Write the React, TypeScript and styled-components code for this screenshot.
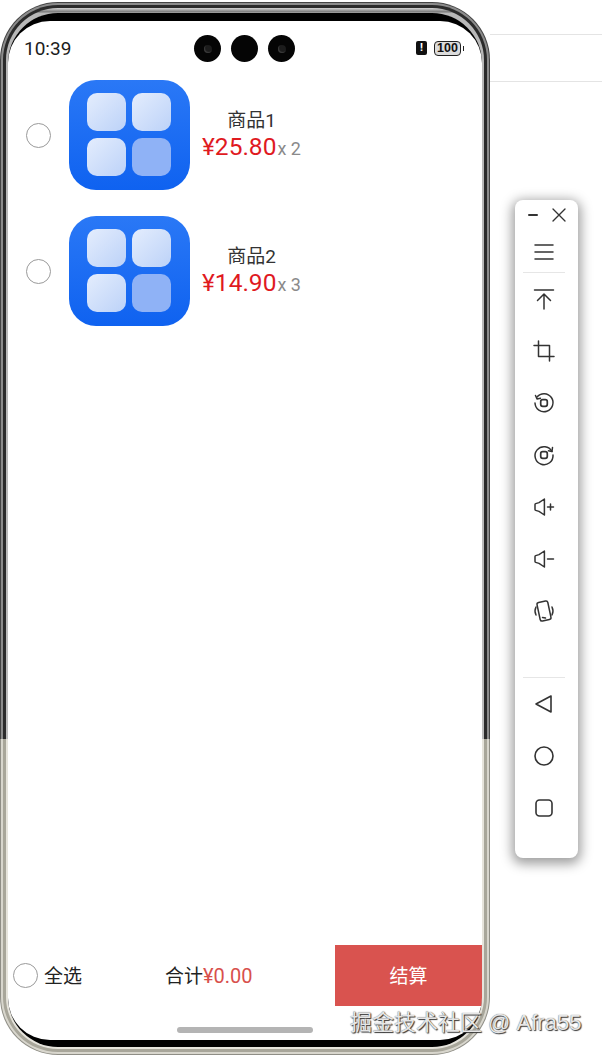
import React from "react";
import styled, { createGlobalStyle } from "styled-components";

const Global = createGlobalStyle`
  html, body { margin: 0; padding: 0; background: #fff; }
  body { font-family: Roboto, "Noto Sans CJK SC", sans-serif; overflow: hidden; }
`;

const Stage = styled.div`
  position: relative; display: flex; width: 602px; height: 1057px; background: #fff; overflow: hidden;
`;
const frame = (dark: string, light: string, at: number) =>
  `linear-gradient(to bottom, ${dark} 0, ${dark} ${at}px, ${light} ${at}px, ${light} 100%)`;
const Phone = styled.div`
  flex: none; width: 490px; height: 1053px; margin-top: 2px; box-sizing: border-box; padding: 1px;
  border-radius: 58px; background: ${frame("#444", "#8f8e86", 737)};
`;
const RingOuter = styled.div`
  height: 100%; box-sizing: border-box; padding: 2px; border-radius: 57px;
  background: ${frame("#8c8c8c", "#d8d6cd", 736)};
`;
const RingMiddle = styled.div`
  height: 100%; box-sizing: border-box; padding: 3px; border-radius: 55px;
  background: ${frame("#2b2b2b", "#a8a69a", 734)};
`;
const RingInner = styled.div`
  height: 100%; box-sizing: border-box; padding: 5px 2px 2px; border-radius: 52px;
  background: linear-gradient(to bottom, #d4d4d4 0, #777 4px, #b8b8b8 5px, #bcbcbc 731px, #e6e4dc 731px, #e6e4dc 100%);
`;
const Bezel = styled.div`
  height: 100%; box-sizing: border-box; padding: 8px 0 7px; border-radius: 50px; background: #000;
`;
const Screen = styled.div`
  display: flex; flex-direction: column; height: 100%; border-radius: 42px; background: #fff; overflow: hidden;
`;
const StatusBar = styled.div`
  flex: none; display: flex; align-items: center; height: 54px; box-sizing: border-box; padding: 0 21px 0 16px;
`;
const Clock = styled.span`
  width: 170px; font-size: 19px; color: #1c1c1c;
`;
const Cameras = styled.div`
  display: flex; gap: 10px;
`;
const Camera = styled.div`
  position: relative; width: 27px; height: 27px; border-radius: 50%; background: #050505;
`;
const Lens = styled.div`
  position: absolute; left: 10px; top: 10px; width: 8px; height: 8px; border-radius: 50%;
  background: #1c1c1c; box-shadow: inset 1px -1px 1px #3c3c3c;
`;
const StatusIcons = styled.div`
  display: flex; align-items: center; gap: 7px; margin-left: auto;
`;
const Alert = styled.div`
  display: flex; align-items: center; justify-content: center; width: 11px; height: 14px; border-radius: 2px;
  background: #111; color: #fff; font-size: 11px; font-weight: 700; line-height: 14px;
`;
const Battery = styled.div`
  position: relative; width: 27px; height: 15px; box-sizing: border-box; border: 1px solid #222; border-radius: 4px;
  background: #dcdcdc; color: #111; font: 700 12.5px/13px "Liberation Sans", sans-serif; text-align: center;
  &::after { content: ""; position: absolute; right: -4px; top: 4px; width: 1px; height: 5px; background: #222; }
`;
const List = styled.div`
  display: flex; flex-direction: column; gap: 26px; padding: 5px 0 0 18px;
`;
const Row = styled.div`
  display: flex; align-items: center; height: 110px;
`;
const Radio = styled.div<{ $size: number }>`
  flex: none; width: ${p => p.$size}px; height: ${p => p.$size}px; box-sizing: border-box;
  border: 1px solid #9a9a9a; border-radius: 50%; background: #fff;
`;
const ProductIcon = styled.svg`
  flex: none; width: 121px; height: 110px; margin-left: 18px; display: block;
`;
const ProductText = styled.div`
  display: flex; flex-direction: column; align-items: center; margin: 0 0 0 12px;
`;
const Title = styled.div`
  font-size: 19px; line-height: 26px; color: #333;
`;
const PriceLine = styled.div`
  display: flex; align-items: baseline; line-height: 26px;
`;
const Price = styled.span`
  font-size: 24.5px; color: #e01a1f;
`;
const Qty = styled.span`
  font-size: 18px; color: #8a8a8a; margin-left: 1px;
`;
const Footer = styled.div`
  flex: none; display: flex; align-items: center; height: 61px; margin-top: auto; padding-left: 5px;
`;
const Label = styled.span`
  font-size: 19px; color: #222; margin: 0 0 3px 6px;
`;
const Total = styled.span`
  font-size: 19px; color: #222; margin: 0 0 3px 83px;
`;
const TotalValue = styled.span`
  font-size: 20px; color: #d8504c;
`;
const PayButton = styled.div`
  width: 147px; height: 61px; box-sizing: border-box; padding-bottom: 2px; margin-left: auto;
  display: flex; align-items: center; justify-content: center;
  background: #d9534f; color: #fff; font-size: 19px;
`;
const HomeArea = styled.div`
  flex: none; height: 34px; display: flex; justify-content: center; padding-top: 21px; box-sizing: border-box;
`;
const HomeBar = styled.div`
  width: 136px; height: 6px; border-radius: 3px; background: #b4b4b4;
`;
const Side = styled.div`
  flex: 1; display: flex; flex-direction: column;
`;
const Hairline = styled.div<{ $top: number }>`
  flex: none; height: 1px; margin-top: ${p => p.$top}px; background: #e4e4e4;
`;
const Panel = styled.div`
  flex: none; width: 63px; height: 658px; box-sizing: border-box; margin: 118px 0 0 25px; padding-right: 5px;
  border-radius: 8px; background: #fff;
  box-shadow: 0 3px 12px 3px rgba(0,0,0,.38); display: flex; flex-direction: column; align-items: center;
`;
const WindowControls = styled.div`
  flex: none; display: flex; justify-content: space-between; align-items: center; width: 40px; height: 30px; margin-left: 5px;
`;
const ToolButton = styled.div<{ $h?: number; $pad?: number }>`
  flex: none; width: 100%; height: ${p => p.$h ?? 52}px; box-sizing: border-box; padding-top: ${p => p.$pad ?? 0}px;
  display: flex; align-items: center; justify-content: center;
`;
const Divider = styled.div<{ $top?: number }>`
  flex: none; width: 42px; height: 1px; margin-top: ${p => p.$top ?? 0}px; background: #e6e6e6;
`;
const Icon = styled.svg.attrs<{ strokeWidth?: number }>(p => ({
  viewBox: "0 0 24 24", fill: "none", stroke: "#333", strokeWidth: p.strokeWidth ?? 1.5, strokeLinecap: "round", strokeLinejoin: "round",
}))`
  width: 24px; height: 24px; display: block;
`;
const Minus = styled(Icon)`
  width: 12px; height: 12px;
`;
const Close = styled(Icon)`
  width: 16px; height: 16px;
`;
const Watermark = styled.div`
  position: absolute; left: 350px; top: 1009px; white-space: nowrap; font-size: 22px; line-height: 28px;
  color: #e6e6e6; text-shadow: 1px 1px 1px #333, 0 0 1px #555;
  font-family: "Liberation Sans", "Noto Sans CJK SC", sans-serif;
`;

const Tile = ({ x, y, fill }: { x: number; y: number; fill: string }) => (
  <rect x={x} y={y} width="39" height="38" rx="10" fill={fill} />
);

const AppIcon = ({ id }: { id: string }) => (
  <ProductIcon viewBox="0 0 121 110">
    <defs>
      <linearGradient id={`${id}bg`} x1="0" y1="0" x2="0" y2="1">
        <stop offset="0" stopColor="#2a78f6" />
        <stop offset="1" stopColor="#0f62f0" />
      </linearGradient>
      <linearGradient id={`${id}t`} x1="0" y1="0" x2="1" y2="1">
        <stop offset="0" stopColor="#e4edfd" />
        <stop offset="1" stopColor="#bcd2f8" />
      </linearGradient>
    </defs>
    <rect width="121" height="110" rx="27" fill={`url(#${id}bg)`} />
    <Tile x={18} y={13} fill={`url(#${id}t)`} />
    <Tile x={63} y={13} fill={`url(#${id}t)`} />
    <Tile x={18} y={58} fill={`url(#${id}t)`} />
    <Tile x={63} y={58} fill="#8fb2f6" />
  </ProductIcon>
);

const items = [
  { id: "a", name: "商品1", price: "¥25.80", qty: "x 2" },
  { id: "b", name: "商品2", price: "¥14.90", qty: "x 3" },
];

export default function App() {
  return (
    <Stage>
      <Global />
      <Phone>
        <RingOuter>
          <RingMiddle>
            <RingInner>
              <Bezel>
                <Screen>
                  <StatusBar>
                    <Clock>10:39</Clock>
                    <Cameras>
                      <Camera><Lens /></Camera>
                      <Camera />
                      <Camera><Lens /></Camera>
                    </Cameras>
                    <StatusIcons>
                      <Alert>!</Alert>
                      <Battery>100</Battery>
                    </StatusIcons>
                  </StatusBar>
                  <List>
                    {items.map(it => (
                      <Row key={it.id}>
                        <Radio $size={25} />
                        <AppIcon id={it.id} />
                        <ProductText>
                          <Title>{it.name}</Title>
                          <PriceLine>
                            <Price>{it.price}</Price>
                            <Qty>{it.qty}</Qty>
                          </PriceLine>
                        </ProductText>
                      </Row>
                    ))}
                  </List>
                  <Footer>
                    <Radio $size={25} />
                    <Label>全选</Label>
                    <Total>合计<TotalValue>¥0.00</TotalValue></Total>
                    <PayButton>结算</PayButton>
                  </Footer>
                  <HomeArea><HomeBar /></HomeArea>
                </Screen>
              </Bezel>
            </RingInner>
          </RingMiddle>
        </RingOuter>
      </Phone>
      <Side>
        <Hairline $top={34} />
        <Hairline $top={46} />
        <Panel>
          <WindowControls>
            <Minus strokeWidth={4}><path d="M4 12h16" /></Minus>
            <Close strokeWidth={2}><path d="M3 3l18 18M21 3L3 21" /></Close>
          </WindowControls>
          <ToolButton $h={42} $pad={2}>
            <Icon><path d="M3 5h18M3 12h18M3 19h18" /></Icon>
          </ToolButton>
          <Divider />
          <ToolButton>
            <Icon><path d="M2.5 3h19M12 7v15M5.5 13.5L12 7l6.5 6.5" /></Icon>
          </ToolButton>
          <ToolButton>
            <Icon><path d="M6.5 2v15.5H22M2 6.5h15.5V22" /></Icon>
          </ToolButton>
          <ToolButton>
            <Icon>
              <path d="M5 6a9 9 0 1 1-2 6" />
              <path d="M3.5 4.5L5 8l3.5-.8" />
              <rect x="8.7" y="8.7" width="6.6" height="6.6" rx="2" strokeWidth="1.7" />
            </Icon>
          </ToolButton>
          <ToolButton>
            <Icon>
              <path d="M20 8.5A9 9 0 1 0 21 12" />
              <path d="M20.5 4.5L20 8.5l-3.5-.8" />
              <rect x="8.7" y="8.7" width="6.6" height="6.6" rx="2" strokeWidth="1.7" />
            </Icon>
          </ToolButton>
          <ToolButton>
            <Icon><path d="M3 9.5v5a1 1 0 0 0 .7.9l3.3 1 5.4 3.6V4L7 7.6l-3.3 1a1 1 0 0 0-.7.9zM15.5 12h6M18.5 9v6" /></Icon>
          </ToolButton>
          <ToolButton>
            <Icon><path d="M3 9.5v5a1 1 0 0 0 .7.9l3.3 1 5.4 3.6V4L7 7.6l-3.3 1a1 1 0 0 0-.7.9zM15.5 12h6" /></Icon>
          </ToolButton>
          <ToolButton>
            <Icon>
              <rect x="6.5" y="2.5" width="11" height="19" rx="2" transform="rotate(-12 12 12)" />
              <path d="M4 8a9 9 0 0 0 0 8M20 8a9 9 0 0 1 0 8M10.5 18.5l3 .6" />
            </Icon>
          </ToolButton>
          <Divider $top={40} />
          <ToolButton>
            <Icon strokeWidth={1.6}><path d="M19 4v16L4 12z" /></Icon>
          </ToolButton>
          <ToolButton>
            <Icon strokeWidth={1.6}><circle cx="12" cy="12" r="9" /></Icon>
          </ToolButton>
          <ToolButton>
            <Icon strokeWidth={1.6}><rect x="4" y="4" width="16" height="16" rx="3.5" /></Icon>
          </ToolButton>
        </Panel>
      </Side>
      <Watermark>掘金技术社区 @ Afra55</Watermark>
    </Stage>
  );
}
